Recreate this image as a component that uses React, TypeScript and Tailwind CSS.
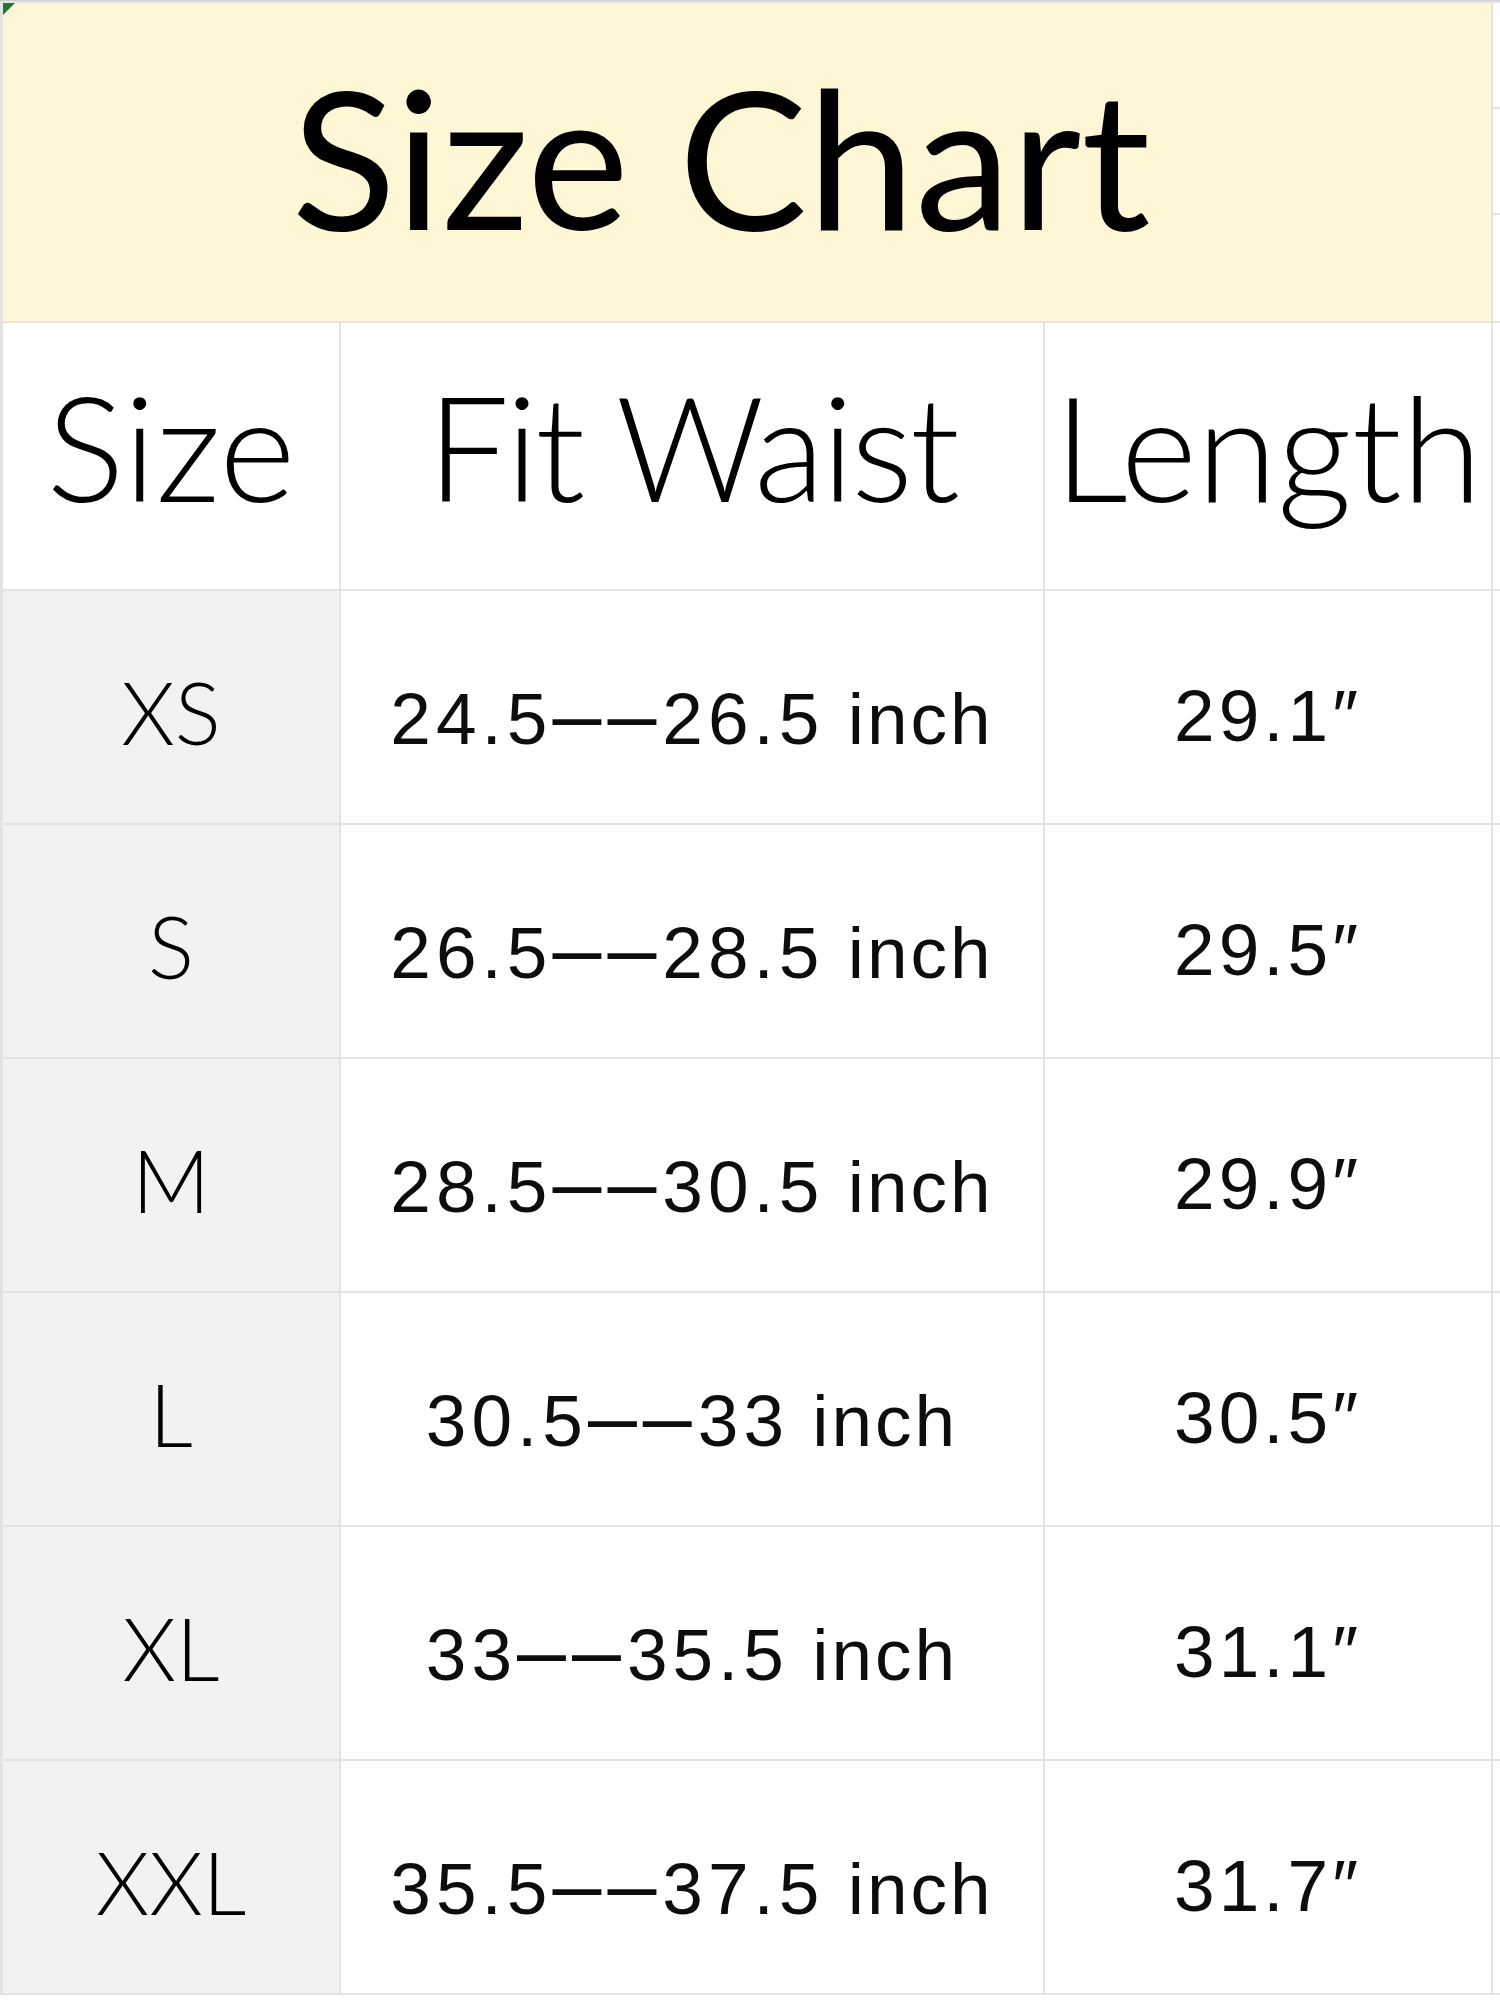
import React from "react";

const rows = [
  { size: "XS", waist: ["24.5", "26.5"], length: "29.1" },
  { size: "S", waist: ["26.5", "28.5"], length: "29.5" },
  { size: "M", waist: ["28.5", "30.5"], length: "29.9" },
  { size: "L", waist: ["30.5", "33"], length: "30.5" },
  { size: "XL", waist: ["33", "35.5"], length: "31.1" },
  { size: "XXL", waist: ["35.5", "37.5"], length: "31.7" },
];

const thin = { fontFamily: "Lato, 'Open Sans', sans-serif" };
const data = { fontFamily: "'Liberation Sans', Arial, sans-serif" };

const App = () => {
  return (
    <div className="w-[1500px] h-[2000px] bg-white overflow-hidden">
      <div className="grid grid-cols-[336px_702px_446px_1fr] grid-rows-[318px_266px_repeat(6,232px)] gap-[2px] bg-[#e3e3e3] pl-[3px] pt-[2px] pb-[2px] border-t border-[#d0d0d0]">
        {/* title */}
        <div className="relative col-span-3 flex items-center justify-center bg-[#fff6d6] pr-[52px]">
          <svg className="absolute left-0 top-0" width="12" height="12" viewBox="0 0 12 12">
            <polygon points="0,0 12,0 0,12" fill="#1d7b2c" />
          </svg>
          <span className="text-[193px] leading-none text-black mt-[-14px]" style={thin}>
            Size Chart
          </span>
        </div>
        <div className="flex flex-col gap-[2px] bg-[#e3e3e3]">
          <div className="h-[104px] bg-white" />
          <div className="h-[104px] bg-white" />
          <div className="flex-1 bg-white" />
        </div>

        {/* header */}
        <div className="flex items-center justify-center bg-white">
          <span className="text-[146px] font-light leading-none text-black mt-[-20px]" style={thin}>Size</span>
        </div>
        <div className="flex items-center justify-center bg-white">
          <span className="text-[146px] font-light leading-none text-black mt-[-20px] tracking-[-3px]" style={thin}>
            Fit Waist
          </span>
        </div>
        <div className="flex items-center justify-center bg-white">
          <span className="text-[146px] font-light leading-none text-black mt-[-20px]" style={thin}>Length</span>
        </div>
        <div className="bg-white" />

        {rows.map((r) => (
          <React.Fragment key={r.size}>
            <div className="flex items-center justify-center bg-[#f2f2f2] pt-[10px]">
              <span className="text-[86px] font-light leading-none text-black" style={thin}>{r.size}</span>
            </div>
            <div className="flex items-center justify-center bg-white pt-[18px]">
              <span className="text-[73px] leading-[72px] tracking-[5px] text-[#0d0d0d]" style={data}>
                {r.waist[0]}
                <span className="text-[88px] leading-[72px] tracking-[6px]">––</span>
                {r.waist[1]}
                <span className="tracking-[3px]"> inch</span>
              </span>
            </div>
            <div className="flex items-center justify-center bg-white pt-[18px]">
              <span className="text-[73px] leading-[72px] tracking-[4px] text-[#0d0d0d]" style={data}>
                {r.length}″
              </span>
            </div>
            <div className="bg-white" />
          </React.Fragment>
        ))}
      </div>
    </div>
  );
};

export default App;
